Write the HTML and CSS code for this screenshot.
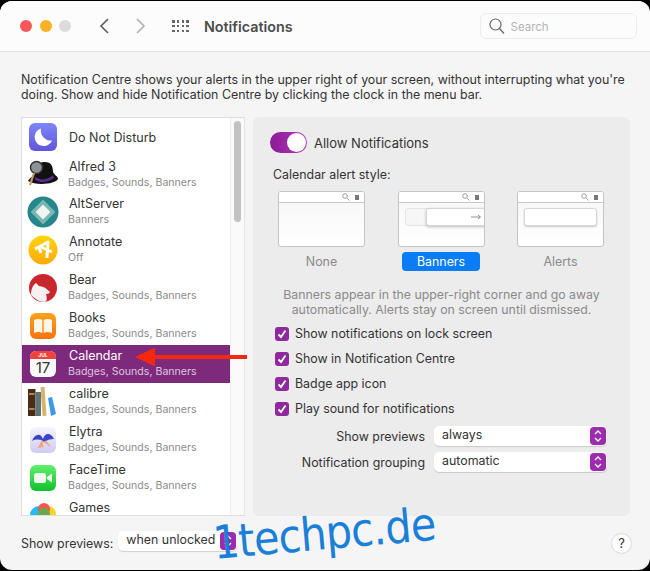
FILE: index.html
```html
<!DOCTYPE html>
<html lang="en">
<head>
    <meta charset="UTF-8">
    <title>Notifications</title>
    <link rel="stylesheet" href="styles.css">
</head>
<body>

<div class="window">
    <div class="toolbar">
        <div class="lights">
            <span class="light red"></span>
            <span class="light yellow"></span>
            <span class="light grey"></span>
        </div>
        <svg class="nav back" width="12" height="18" viewBox="0 0 12 18"><path d="M10 2 L3 9 L10 16" /></svg>
        <svg class="nav forward" width="12" height="18" viewBox="0 0 12 18"><path d="M2 2 L9 9 L2 16" /></svg>
        <div class="grid-icon">
            <i></i><i></i><i></i><i></i>
            <i></i><i></i><i></i><i></i>
            <i></i><i></i><i></i><i></i>
        </div>
        <div class="title">Notifications</div>
        <div class="search">
            <svg width="16" height="17" viewBox="0 0 16 17"><circle cx="6.5" cy="6.5" r="5.5" /><path d="M10.5 10.5 L15 15.5" /></svg>
            <span>Search</span>
        </div>
    </div>

    <div class="content">
        <p class="intro">Notification Centre shows your alerts in the upper right of your screen, without interrupting what you're doing. Show and hide Notification Centre by clicking the clock in the menu bar.</p>

        <div class="columns">
            <div class="app-list">
                <div class="rows">
                    <div class="row first">
                        <svg class="icon mid" viewBox="0 0 28 28"><defs><linearGradient id="moon" x1="0" y1="0" x2="0" y2="1"><stop offset="0" stop-color="#7f86f8"/><stop offset="1" stop-color="#5f55dc"/></linearGradient></defs><rect width="28" height="28" rx="6" fill="url(#moon)"/><path d="M12 5.5 A9 9 0 1 0 23 17.5 A10 10 0 0 1 12 5.5 Z" fill="#fff"/></svg>
                        <div class="name-only">Do Not Disturb</div>
                    </div>
                    <div class="row">
                        <svg class="icon wide" viewBox="0 0 32 30"><path d="M1 22 C4 17 7 18 8 14 C9 5 13 3 18 3 C24 3 26 7 26 13 C28 17 31 17 31 20 C29 25 9 27 1 22 Z" fill="#111"/><path d="M8 18 C14 22 21 21 26 16 L27 19 C21 24 13 24 8 21 Z" fill="#5c2a91"/><circle cx="9.5" cy="8.5" r="6" fill="#8d9294" stroke="#333" stroke-width="1.5"/><path d="M7 14 L3 26" stroke="#c99a5b" stroke-width="2.2"/></svg>
                        <div class="text"><div class="name">Alfred 3</div><div class="sub">Badges, Sounds, Banners</div></div>
                    </div>
                    <div class="row">
                        <svg class="icon wide" viewBox="0 0 32 32"><circle cx="16" cy="16" r="15.5" fill="#27858c"/><path d="M16 5 L27 16 L16 27 L5 16 Z" fill="#79b8b4" stroke="#79b8b4" stroke-width="2" stroke-linejoin="round"/><path d="M16 10 L22 16 L16 22 L10 16 Z" fill="#f0f5f4" stroke="#f0f5f4" stroke-width="2" stroke-linejoin="round"/></svg>
                        <div class="text"><div class="name">AltServer</div><div class="sub">Banners</div></div>
                    </div>
                    <div class="row">
                        <svg class="icon big" viewBox="0 0 30 30"><defs><linearGradient id="ann" x1="0" y1="0" x2="0" y2="1"><stop offset="0" stop-color="#ffd60a"/><stop offset="1" stop-color="#ffa908"/></linearGradient></defs><circle cx="15" cy="15" r="14.5" fill="url(#ann)"/><path d="M7 14 L20 7 L19 23 M10 11 L13 18 M13 12 L24 17" fill="none" stroke="#fff" stroke-width="3" stroke-linejoin="round"/></svg>
                        <div class="text"><div class="name">Annotate</div><div class="sub">Off</div></div>
                    </div>
                    <div class="row">
                        <svg class="icon mid" viewBox="0 0 28 28"><circle cx="14" cy="14" r="14" fill="#c9272d"/><path d="M2 21 C2 15 4 11 7 9 L10 12 C14 12 17 14 21 18 C20 20 18 20 17 20 C18 23 18 26 17 27.500 C13 28.500 8 27 2 21 Z" fill="#f4f1f0"/></svg>
                        <div class="text"><div class="name">Bear</div><div class="sub">Badges, Sounds, Banners</div></div>
                    </div>
                    <div class="row">
                        <svg class="icon" viewBox="0 0 26 26"><defs><linearGradient id="books" x1="0" y1="0" x2="0" y2="1"><stop offset="0" stop-color="#ffa21a"/><stop offset="1" stop-color="#f9730f"/></linearGradient></defs><rect width="26" height="26" rx="6" fill="url(#books)"/><path d="M4 7 C7 5.5 10 5.5 12.3 7 V20 C10 18.5 7 18.5 4 20 Z M13.7 7 C16 5.5 19 5.5 22 7 V20 C19 18.5 16 18.5 13.7 20 Z" fill="#fff6ea"/></svg>
                        <div class="text"><div class="name">Books</div><div class="sub">Badges, Sounds, Banners</div></div>
                    </div>
                    <div class="row selected">
                        <svg class="icon" viewBox="0 0 26 26"><rect width="26" height="26" rx="6" fill="#fafafa"/><path d="M0 8 V6 A6 6 0 0 1 6 0 H20 A6 6 0 0 1 26 6 V8 Z" fill="#f2433a"/><text x="13" y="6" class="cal-month">JUL</text><text x="13" y="22" class="cal-day">17</text></svg>
                        <div class="text"><div class="name">Calendar</div><div class="sub">Badges, Sounds, Banners</div></div>
                    </div>
                    <div class="row">
                        <svg class="icon wide" viewBox="0 0 32 32"><rect x="1" y="3" width="7.5" height="27" fill="#4a2c17"/><path d="M2 8 H7.500 M2 23 H7.500" stroke="#c9a468" stroke-width="1.500"/><rect x="8.500" y="6" width="5.500" height="24" fill="#5f7378"/><rect x="14.500" y="1" width="4" height="29" fill="#d6b56a" transform="rotate(-4 16 15)"/><path d="M21 12 L25 11 L29 28 L24 30 Z" fill="#3f97e8"/></svg>
                        <div class="text"><div class="name">calibre</div><div class="sub">Badges, Sounds, Banners</div></div>
                    </div>
                    <div class="row">
                        <svg class="icon" viewBox="0 0 26 26"><defs><linearGradient id="ely" x1="0" y1="0" x2="0" y2="1"><stop offset="0" stop-color="#f6f5fb"/><stop offset="1" stop-color="#cfcaf2"/></linearGradient></defs><rect width="26" height="26" rx="6" fill="url(#ely)"/><path d="M2 14 C5 6 11 6 13 12 C15 5 21 6 24 12 C20 12 17 13 14 15 C11 12 6 12 2 14 Z" fill="#3d43c6"/><path d="M8 21 L12 14 L13 20 M14 15 L20 19 L16 14 Z" fill="#f0a77e" stroke="#f0a77e"/></svg>
                        <div class="text"><div class="name">Elytra</div><div class="sub">Badges, Sounds, Banners</div></div>
                    </div>
                    <div class="row">
                        <svg class="icon" viewBox="0 0 26 26"><defs><linearGradient id="face" x1="0" y1="0" x2="0" y2="1"><stop offset="0" stop-color="#5ff06e"/><stop offset="1" stop-color="#12c02d"/></linearGradient></defs><rect width="26" height="26" rx="6" fill="url(#face)"/><rect x="4" y="8" width="12" height="10" rx="2.5" fill="#f1f6f0"/><path d="M17 12 L22 8.5 V17.5 L17 14 Z" fill="#f1f6f0"/></svg>
                        <div class="text"><div class="name">FaceTime</div><div class="sub">Badges, Sounds, Banners</div></div>
                    </div>
                    <div class="row">
                        <svg class="icon" viewBox="0 0 26 26"><circle cx="9" cy="13" r="9" fill="#25b9f5"/><circle cx="18" cy="12" r="8" fill="#f9d423"/><circle cx="14" cy="7" r="6" fill="#ee5a4f"/><circle cx="14" cy="12" r="6" fill="#6aa84f"/></svg>
                        <div class="text"><div class="name">Games</div></div>
                    </div>
                </div>
                <div class="scroll-track"><div class="scroll-thumb"></div></div>
            </div>

            <div class="panel">
                <div class="allow">
                    <div class="toggle"><span class="knob"></span></div>
                    <span class="allow-label">Allow Notifications</span>
                </div>
                <div class="style-label">Calendar alert style:</div>
                <div class="styles">
                    <div class="style-option">
                        <div class="thumb">
                            <div class="thumb-bar"><svg width="8" height="8" viewBox="0 0 8 8"><circle cx="3" cy="3" r="2.3"/><path d="M5 5 L7.5 7.5"/></svg><i></i></div>
                        </div>
                        <div class="style-name">None</div>
                    </div>
                    <div class="style-option">
                        <div class="thumb">
                            <div class="thumb-bar"><svg width="8" height="8" viewBox="0 0 8 8"><circle cx="3" cy="3" r="2.3"/><path d="M5 5 L7.5 7.5"/></svg><i></i></div>
                            <div class="banner-ghost"></div>
                            <div class="banner-box"><svg width="10" height="6" viewBox="0 0 10 6"><path d="M0 3 H9 M7 1 L9.500 3 L7 5"/></svg></div>
                        </div>
                        <div class="style-name active">Banners</div>
                    </div>
                    <div class="style-option">
                        <div class="thumb">
                            <div class="thumb-bar"><svg width="8" height="8" viewBox="0 0 8 8"><circle cx="3" cy="3" r="2.3"/><path d="M5 5 L7.5 7.5"/></svg><i></i></div>
                            <div class="alert-box"></div>
                        </div>
                        <div class="style-name">Alerts</div>
                    </div>
                </div>
                <p class="desc">Banners appear in the upper-right corner and go away automatically. Alerts stay on screen until dismissed.</p>
                <div class="checks">
                    <div class="check"><span class="box"><svg width="10" height="10" viewBox="0 0 10 10"><path d="M1.5 5.5 L4 8 L8.5 1.5"/></svg></span>Show notifications on lock screen</div>
                    <div class="check"><span class="box"><svg width="10" height="10" viewBox="0 0 10 10"><path d="M1.5 5.5 L4 8 L8.5 1.5"/></svg></span>Show in Notification Centre</div>
                    <div class="check"><span class="box"><svg width="10" height="10" viewBox="0 0 10 10"><path d="M1.5 5.5 L4 8 L8.5 1.5"/></svg></span>Badge app icon</div>
                    <div class="check"><span class="box"><svg width="10" height="10" viewBox="0 0 10 10"><path d="M1.5 5.5 L4 8 L8.5 1.5"/></svg></span>Play sound for notifications</div>
                </div>
                <div class="form-row">
                    <label>Show previews</label>
                    <div class="select wide-select">always<span class="stepper"><svg width="10" height="14" viewBox="0 0 10 14"><path d="M2 5 L5 2 L8 5 M2 9 L5 12 L8 9"/></svg></span></div>
                </div>
                <div class="form-row">
                    <label>Notification grouping</label>
                    <div class="select wide-select">automatic<span class="stepper"><svg width="10" height="14" viewBox="0 0 10 14"><path d="M2 5 L5 2 L8 5 M2 9 L5 12 L8 9"/></svg></span></div>
                </div>
            </div>
        </div>

        <div class="footer">
            <label>Show previews:</label>
            <div class="select small-select">when unlocked<span class="stepper"><svg width="10" height="14" viewBox="0 0 10 14"><path d="M2 5 L5 2 L8 5 M2 9 L5 12 L8 9"/></svg></span></div>
            <div class="help">?</div>
        </div>
    </div>

    <svg class="red-arrow" width="112" height="20" viewBox="0 0 112 20"><path d="M0 10 L20 0.5 L20 8 L112 8 L112 12 L20 12 L20 19.5 Z"/></svg>
    <div class="watermark">1techpc.de</div>
</div>

</body>
</html>
```

FILE: styles.css
```css
html, body {
    margin: 0;
    padding: 0;
    background: #000;
}
body {
    width: 650px;
    height: 571px;
    overflow: hidden;
    font-family: Inter, "Liberation Sans", sans-serif;
    font-size: 12.4px;
    color: #333;
}
.window {
    position: relative;
    height: 569px;
    margin-top: 1px;
    border-radius: 12px;
    background: #f5f5f5;
    overflow: hidden;
    display: flex;
    flex-direction: column;
}

/* toolbar */
.toolbar {
    height: 50px;
    flex: none;
    display: flex;
    align-items: center;
    background: #fcfcfc;
    border-bottom: 1px solid #e2e2e2;
}
.lights {
    display: flex;
    gap: 7.5px;
    margin-left: 20px;
}
.light {
    width: 12px;
    height: 12px;
    border-radius: 50%;
}
.red { background: #f9575a; }
.yellow { background: #fbb126; }
.grey { background: #dcdcdc; }
.nav {
    fill: none;
    stroke-width: 1.6;
}
.back {
    stroke: #5a5a5a;
    margin-left: 27px;
}
.forward {
    stroke: #b0b0b0;
    margin-left: 25px;
}
.grid-icon {
    display: grid;
    grid-template-columns: repeat(4, 2.5px);
    gap: 2.25px 2.33px;
    margin-left: 25px;
}
.grid-icon i {
    width: 2.5px;
    height: 2.5px;
    background: #666;
}
.title {
    margin-left: 15px;
    font-size: 14.3px;
    font-weight: 600;
    color: #4b4b4b;
}
.search {
    margin-left: auto;
    margin-right: 13px;
    width: 157px;
    height: 26px;
    box-sizing: border-box;
    border: 1px solid #ececec;
    border-radius: 6px;
    display: flex;
    align-items: center;
    padding-left: 8px;
    gap: 5.5px;
    font-size: 11.5px;
    color: #b4b4b4;
}
.search span {
    padding-top: 1px;
}
.search svg {
    fill: none;
    stroke: #666;
    stroke-width: 1.2;
}

/* main area */
.content {
    flex: 1;
    display: flex;
    flex-direction: column;
    padding: 0 20px 0 21px;
}
.intro {
    margin: 20px 0 0;
    line-height: 15px;
    height: 45px;
}
.columns {
    display: flex;
    gap: 8px;
    height: 399px;
}

/* app list */
.app-list {
    width: 224px;
    box-sizing: border-box;
    border: 1px solid #dedede;
    border-right-color: #e4e4e4;
    background: #fff;
    display: flex;
    overflow: hidden;
}
.rows {
    flex: 1;
    min-width: 0;
    overflow: hidden;
}
.row {
    height: 37.9px;
    display: flex;
    align-items: center;
    padding-left: 7px;
    font-size: 12.5px;
}
.row.first {
    height: 37.5px;
}
.icon {
    width: 26px;
    height: 26px;
    flex: none;
    margin-left: 1px;
    margin-right: 13px;
}
.icon.mid {
    width: 28px;
    height: 28px;
    margin-left: 0;
    margin-right: 12px;
}
.icon.big {
    width: 30px;
    height: 30px;
    margin-left: -1px;
    margin-right: 11px;
}
.icon.wide {
    width: 32px;
    height: 32px;
    margin-left: -2px;
    margin-right: 10px;
}
.text {
    align-self: flex-start;
    padding-top: 3px;
}
.name, .name-only {
    line-height: 15px;
    color: #333;
}
.name-only {
    padding-top: 2px;
}
.sub {
    margin: 1px 0 0 -1px;
    line-height: 15px;
    font-size: 10.6px;
    color: #8c8c8c;
}
.selected {
    background: #7e2a7c;
}
.selected .name {
    color: #fff;
}
.selected .sub {
    color: #dcc4dc;
}
.cal-month {
    font-size: 5px;
    font-weight: 700;
    fill: #fff;
    text-anchor: middle;
}
.cal-day {
    font-size: 15px;
    fill: #333;
    text-anchor: middle;
}
.scroll-track {
    width: 14px;
    flex: none;
    background: #fafafa;
    border-left: 1px solid #ececec;
    box-sizing: border-box;
    padding: 3px 3px;
}
.scroll-thumb {
    width: 7px;
    height: 101px;
    border-radius: 4px;
    background: #c2c2c2;
}

/* right panel */
.panel {
    flex: 1;
    background: #ececec;
    border-radius: 6px;
    padding: 14px 0 0 17px;
    box-sizing: border-box;
}
.allow {
    display: flex;
    align-items: center;
    gap: 7px;
    height: 22px;
    font-size: 13px;
}
.allow-label {
    padding-top: 2px;
}
.toggle {
    width: 37px;
    height: 21px;
    border-radius: 11px;
    background: linear-gradient(90deg, #8b1a95, #b03cb8);
    position: relative;
}
.knob {
    position: absolute;
    right: 1px;
    top: 1px;
    width: 19px;
    height: 19px;
    border-radius: 50%;
    background: #fff;
}
.style-label {
    margin: 14px 0 0 3px;
    line-height: 15px;
}
.styles {
    display: flex;
    margin: 9px 0 0 8px;
    gap: 32.5px;
}
.style-option {
    width: 87px;
    display: flex;
    flex-direction: column;
    align-items: center;
}
.thumb {
    position: relative;
    width: 87px;
    height: 56px;
    box-sizing: border-box;
    border: 1px solid #c4c4c4;
    border-radius: 3px;
    background: linear-gradient(#f6f6f6, #ffffff);
    overflow: hidden;
}
.thumb-bar {
    height: 10px;
    background: #fff;
    border-bottom: 1px solid #c8c8c8;
    display: flex;
    justify-content: flex-end;
    align-items: center;
    gap: 5px;
    padding-right: 5px;
}
.thumb-bar svg {
    fill: none;
    stroke: #888;
    stroke-width: 0.8;
}
.thumb-bar i {
    width: 4px;
    height: 5px;
    background: #777;
}
.banner-ghost {
    position: absolute;
    left: 6px;
    top: 16px;
    width: 30px;
    height: 16px;
    border: 1px solid #e4e4e4;
    border-radius: 3px;
    background: #f6f6f6;
}
.banner-box {
    position: absolute;
    left: 27px;
    top: 16px;
    width: 62px;
    height: 16px;
    border: 1px solid #d6d6d6;
    border-radius: 3px;
    background: #fff;
    box-shadow: 0 1px 3px rgba(0, 0, 0, 0.25);
}
.banner-box svg {
    position: absolute;
    left: 44px;
    top: 5px;
    fill: none;
    stroke: #777;
    stroke-width: 0.8;
}
.alert-box {
    position: absolute;
    left: 6px;
    top: 16px;
    width: 71px;
    height: 16px;
    border: 1px solid #d6d6d6;
    border-radius: 3px;
    background: #fff;
    box-shadow: 0 1px 2px rgba(0, 0, 0, 0.2);
}
.style-name {
    margin-top: 5px;
    height: 19px;
    line-height: 19px;
    color: #8a8a8a;
}
.style-name.active {
    width: 78px;
    text-align: center;
    color: #fff;
    background: #0a7cf5;
    border-radius: 4px;
}
.desc {
    margin: 16px 0 0;
    padding-right: 17px;
    line-height: 15px;
    font-size: 12.3px;
    text-align: center;
    color: #8a8a8a;
}
.checks {
    margin: 4px 0 0 5px;
}
.check {
    display: flex;
    align-items: center;
    height: 25px;
    gap: 6px;
}
.box {
    width: 14px;
    height: 14px;
    border-radius: 3px;
    background: #8e2a9e;
    display: flex;
    align-items: center;
    justify-content: center;
}
.box svg {
    fill: none;
    stroke: #fff;
    stroke-width: 1.8;
}
.form-row {
    display: flex;
    align-items: center;
    height: 20px;
    margin-top: 6px;
}
.checks + .form-row {
    margin-top: 5px;
}
.form-row label {
    width: 155px;
    text-align: right;
    margin-right: 9px;
}
.select {
    position: relative;
    box-sizing: border-box;
    height: 20px;
    border-radius: 5px;
    background: #fff;
    box-shadow: 0 1px 1px rgba(0, 0, 0, 0.15);
    padding-left: 8px;
    line-height: 18px;
}
.wide-select {
    width: 173px;
}
.stepper {
    position: absolute;
    right: 1px;
    top: 1px;
    width: 16px;
    height: 18px;
    border-radius: 4px;
    background: #9c2bad;
    display: flex;
    align-items: center;
    justify-content: center;
}
.stepper svg {
    fill: none;
    stroke: #fff;
    stroke-width: 1.3;
}

/* footer */
.footer {
    flex: 1;
    display: flex;
    align-items: center;
}
.small-select {
    width: 119px;
    margin: -4px 0 0 5px;
}
.help {
    margin-left: auto;
    margin-right: -1px;
    width: 19px;
    height: 19px;
    border-radius: 50%;
    background: #fff;
    box-shadow: 0 0 2px rgba(0, 0, 0, 0.3);
    text-align: center;
    line-height: 19px;
    font-size: 13px;
}

/* overlays */
.red-arrow {
    position: absolute;
    left: 135px;
    top: 346px;
    fill: #f5280f;
}
.watermark {
    position: absolute;
    left: 213px;
    top: 514px;
    font-family: "DejaVu Sans Condensed", "DejaVu Sans", sans-serif;
    font-size: 46px;
    line-height: 56px;
    letter-spacing: -0.8px;
    color: #1a7fd8;
    transform: rotate(-5deg);
    transform-origin: left center;
}
```
